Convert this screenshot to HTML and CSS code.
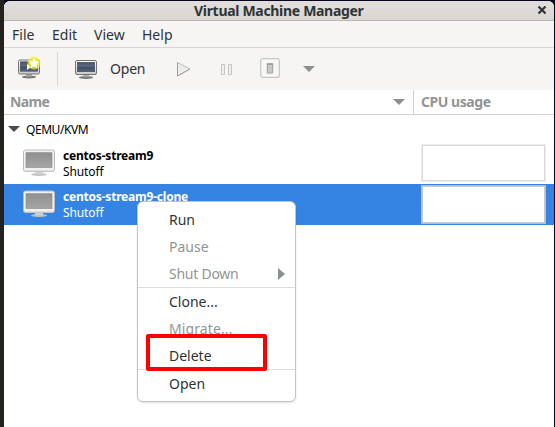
FILE: index.html
```html
<!DOCTYPE html>
<html lang="en">
<head>
<meta charset="utf-8">
<title>Virtual Machine Manager</title>
<link rel="stylesheet" href="styles.css">
</head>
<body>
<svg class="defs" width="0" height="0" aria-hidden="true">
  <defs>
    <linearGradient id="screen" x1="0" y1="0" x2="0" y2="1"><stop offset="0" stop-color="#465366"/><stop offset=".4" stop-color="#5d6b7f"/><stop offset=".55" stop-color="#435168"/><stop offset="1" stop-color="#53647b"/></linearGradient>
    <linearGradient id="bezel" x1="0" y1="0" x2="0" y2="1"><stop offset="0" stop-color="#fff"/><stop offset="1" stop-color="#c9c9c7"/></linearGradient>
    <linearGradient id="grey" x1="0" y1="0" x2="0" y2="1"><stop offset="0" stop-color="#8f8f8f"/><stop offset="1" stop-color="#a6a6a6"/></linearGradient>
    <radialGradient id="glow"><stop offset=".45" stop-color="#f2ee20"/><stop offset=".8" stop-color="#f1ed3a" stop-opacity=".7"/><stop offset="1" stop-color="#f5f16a" stop-opacity="0"/></radialGradient>
    <symbol id="monitor" viewBox="0 0 24 22">
      <ellipse cx="12" cy="18.5" rx="7.2" ry="1.4" fill="#777975"/>
      <path d="M9 15h6v3H9z" fill="#aaa"/>
      <rect x="1.5" y="1.5" width="21" height="14" rx="1.5" fill="url(#bezel)" stroke="#737571"/>
      <rect x="3.3" y="3.3" width="17.4" height="9.4" fill="url(#screen)" stroke="#3c485b" stroke-width=".6"/>
    </symbol>
    <symbol id="vm-off" viewBox="0 0 34 30">
      <ellipse cx="17" cy="25.5" rx="8" ry="1.5" fill="#c4c4c4"/>
      <path d="M13 22h8v3h-8z" fill="#d1d1d1"/>
      <rect x="1.5" y="1" width="31" height="21.5" rx="2" fill="#f1f1f1" stroke="#bababa"/>
      <path d="M3 22h28" stroke="#d0d0d0"/>
      <rect x="4" y="3.7" width="26" height="14.8" fill="url(#grey)" stroke="#858585" stroke-width=".6"/>
    </symbol>
  </defs>
</svg>
<main class="window">
  <header class="titlebar"><h1 class="title">Virtual Machine Manager</h1>
    <svg class="close" viewBox="0 0 10 10"><path d="M1.5 1.5l7 7M8.5 1.5l-7 7" stroke="#2e3436" stroke-width="2.2"/></svg>
  </header>
  <nav class="menubar"><span>File</span><span>Edit</span><span>View</span><span>Help</span></nav>
  <div class="toolbar">
    <svg class="new-vm" viewBox="0 0 26 26"><use href="#monitor" x="0" y="2.5" width="26" height="22"/><path d="M11 8v6l4-3z" fill="#fff"/><circle cx="18" cy="7" r="7.2" fill="url(#glow)"/><path d="M18 1.8l1.6 3.5 3.8.4-2.8 2.6.8 3.9-3.4-1.9-3.4 1.9.8-3.9-2.8-2.6 3.8-.4z" fill="#fff"/></svg>
    <i class="divider"></i>
    <svg class="open-icon"><use href="#monitor" width="24" height="22"/></svg>
    <span class="open-label">Open</span>
    <svg class="play" viewBox="0 0 16 16"><path d="M1.5 1.5l12.5 6.5-12.5 7z" fill="#ececea" stroke="#bcbdbb" stroke-linejoin="round"/><path d="M1.5 1.5v13.5l12.5-7" fill="none" stroke="#a0a19f" stroke-linejoin="round"/></svg>
    <svg class="pause" viewBox="0 0 14 13"><path d="M1.5 1.5h3v10h-3zM8.5 1.5h3v10h-3z" fill="#efefed" stroke="#c4c5c3"/></svg>
    <svg class="power" viewBox="0 0 20 20"><rect x=".7" y=".7" width="18.6" height="18.6" rx="2" fill="#f7f7f6" stroke="#c6c6c4" stroke-width="1.2"/><rect x="6" y="5" width="8" height="11" rx="1" fill="#e6e6e5"/><path d="M7.5 6h5v9h-5z" fill="#c9c9c8" stroke="#a9a9a8"/><path d="M7 6h6" stroke="#858684"/></svg>
    <i class="arrow"></i>
  </div>
  <div class="columns"><div class="col-name"><b class="t-name">Name</b><i class="arrow"></i></div><div class="col-cpu"><b class="t-cpu">CPU usage</b></div></div>
  <section class="list">
    <div class="group"><i class="arrow expander"></i><span class="t-group">QEMU/KVM</span></div>
    <div class="row"><svg class="vm"><use href="#vm-off" width="34" height="30"/></svg><div class="info"><b>centos-stream9</b><span>Shutoff</span></div><div class="chart"></div></div>
    <div class="row selected"><svg class="vm"><use href="#vm-off" width="34" height="30"/></svg><div class="info"><b>centos-stream9-clone</b><span>Shutoff</span></div><div class="chart"></div></div>
  </section>
</main>
<div class="popup">
  <div class="item"><span>Run</span></div>
  <div class="item off"><span>Pause</span></div>
  <div class="item off"><span class="t-shut">Shut Down</span><i class="submenu"></i></div>
  <hr>
  <div class="item"><span>Clone...</span></div>
  <div class="item off"><span class="t-migrate">Migrate...</span></div>
  <div class="item"><span>Delete</span></div>
  <hr>
  <div class="item"><span>Open</span></div>
</div>
<div class="highlight"></div>
</body>
</html>
```
FILE: styles.css
```css
* { box-sizing: border-box; }
body { margin: 0; width: 555px; height: 427px; overflow: hidden; padding: 1px 1px 0 4px; background: linear-gradient(90deg, #24221f 0 4px, #04051d 4px); font: 14px/20px "Noto Sans", sans-serif; color: #2e3436; }
.defs { position: absolute; }
svg { display: block; flex: none; }
span, b { white-space: nowrap; }
.window { height: 426px; background: #fff; border-radius: 6px 6px 0 0; overflow: hidden; }
.titlebar { height: 20px; background: linear-gradient(#e1dedb, #dad6d2); border-bottom: 1px solid #bfb8b1; display: flex; }
.title { margin: 0 0 0 190px; font-size: 14px; line-height: 19px; font-weight: 700; white-space: nowrap; width: 170px; letter-spacing: -.31px; }
.close { width: 10px; height: 10px; margin: 4px 7px 0 auto; }
.menubar { height: 27px; background: #f6f5f4; border-bottom: 1px solid #d9d7d5; display: grid; grid-template-columns: 40px 42px 48px 40px; padding-left: 8px; line-height: 27px; }
.toolbar { height: 42px; background: #f6f5f4; display: flex; align-items: flex-start; }
.new-vm { width: 26px; height: 26px; margin: 8px 0 0 12px; }
.divider { width: 1px; height: 34px; background: #dad8d6; margin: 4px 0 0 15px; }
.open-icon { width: 24px; height: 22px; margin: 11px 0 0 16px; }
.open-label { width: 37px; margin: 11px 0 0 12px; letter-spacing: -.2px; }
.play { width: 16px; height: 16px; margin: 13px 0 0 29px; }
.pause { width: 14px; height: 13px; margin: 15px 0 0 28px; }
.power { width: 20px; height: 20px; margin: 10px 0 0 26px; }
.arrow { border: 6px solid transparent; border-top-color: #8b908e; border-bottom: 0; width: 0; height: 0; }
.toolbar .arrow { margin: 18px 0 0 23px; }
.columns { height: 25px; border-bottom: 1px solid #d5d0cc; display: flex; color: #929595; line-height: 24px; }
.col-name { width: 410px; border-right: 1px solid #d5d0cc; padding: 0 8px 0 6px; display: flex; justify-content: space-between; align-items: center; }
.col-cpu { padding-left: 7px; }
.t-name { letter-spacing: -.6px; }
.t-cpu { letter-spacing: -.45px; }
.list { font-size: 12px; color: #000; }
.group { height: 28px; display: flex; align-items: center; padding-left: 4px; }
.t-group { letter-spacing: -.45px; padding-top: 2px; }
.expander { border-top-color: #4c4c4c; margin-right: 6px; }
.row { height: 41px; display: flex; align-items: flex-start; padding-left: 18px; }
.selected { background: #3584e4; color: #fff; }
.vm { width: 34px; height: 30px; margin-top: 6px; }
.info { width: 351px; margin: 5px 0 0 7px; display: flex; flex-direction: column; line-height: 16px; }
.info b { letter-spacing: -.2px; }
.info span { letter-spacing: -.1px; }
.chart { width: 125px; height: 38px; margin: 1px 0 0 7px; border: 1px solid #efecec; background: #fff; box-shadow: inset 0 0 0 1px #ddd8d8; }
.selected .chart { height: 39px; border-color: #a9c0dd; box-shadow: inset 0 0 0 1px #cbcac9; }
.popup { position: absolute; left: 137px; top: 201px; width: 159px; height: 201px; padding: 4px 0; background: #fff; border: 1px solid #c6c5c4; border-radius: 6px; box-shadow: 0 1px 2px #0002; }
.item { height: 27px; padding: 0 10px 0 31px; display: flex; align-items: center; justify-content: space-between; }
.off { color: #929595; }
.t-shut { letter-spacing: -.25px; }
.t-migrate { letter-spacing: .1px; }
.popup hr { height: 1px; border: 0; margin: 0; background: #dedddc; }
.submenu { border: 6px solid transparent; border-left: 7px solid #8b908e; border-right: 0; }
.highlight { position: absolute; left: 146px; top: 334px; width: 121px; height: 37px; border: 4px solid #fe0000; border-radius: 2px; }
```
